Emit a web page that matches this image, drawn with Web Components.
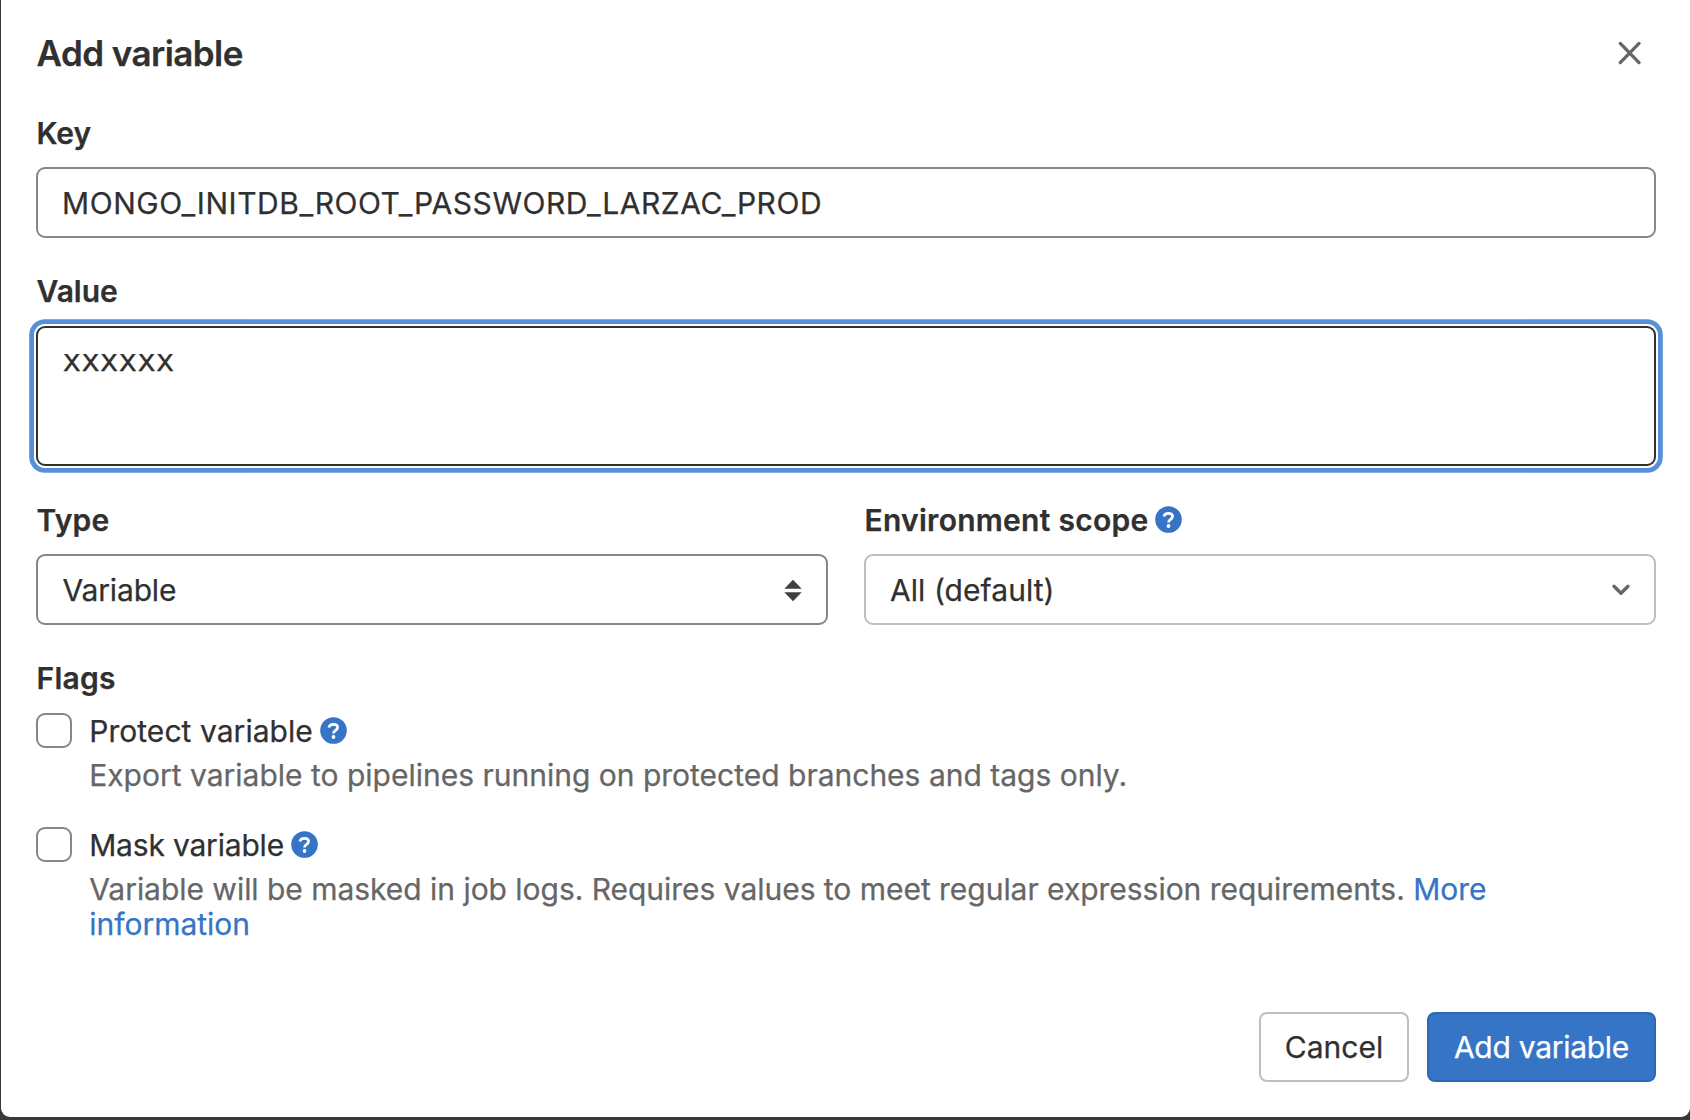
<!DOCTYPE html>
<html lang="en">
<head>
<meta charset="utf-8">
<title>Add variable</title>
<style>
html, body { margin: 0; height: 100%; }
body { background: #3a3939; overflow: hidden; font-family: Inter, "Liberation Sans", sans-serif; font-size: 30px; color: #303030; -webkit-text-stroke: .25px; }
</style>
</head>
<body>
<add-variable-modal></add-variable-modal>
<script>
const define = (name, html) => {
  const template = document.createElement('template');
  template.innerHTML = `<style>*{box-sizing:border-box}</style>${html}`;
  customElements.define(name, class extends HTMLElement {
    constructor() {
      super();
      this.attachShadow({ mode: 'open' }).append(template.content.cloneNode(true));
    }
  });
};

define('help-icon', `
<style>:host{display:block;width:27px;height:27px;flex:none;margin-top:-1px;margin-left:-.5px} svg{display:block}</style>
<svg width="27" height="27" viewBox="0 0 27 27" fill="none">
  <circle cx="13.5" cy="13.5" r="13.3" fill="#3675c5"/>
  <path d="M8.9 10.5C9.3 8.5 11 7.3 13.4 7.3c2.5 0 4.2 1.3 4.2 3.3 0 2.8-4.1 2.9-4.1 5.8" stroke="#fff" stroke-width="2.7" stroke-linejoin="round"/>
  <circle cx="13.5" cy="20" r="1.9" fill="#fff"/>
</svg>`);

define('close-button', `
<style>:host{display:block;width:24px;height:24px} svg{display:block}</style>
<svg width="24" height="24" viewBox="0 0 24 24" fill="none" stroke="#666" stroke-width="3.3" stroke-linecap="round">
  <path d="M2.3 2.4 21 21.6M21 2.4 2.3 21.6"/>
</svg>`);

define('sort-icon', `
<style>:host{display:block;width:18px;height:23px} svg{display:block}</style>
<svg width="18" height="23" viewBox="0 0 18 23" fill="#404040"><path d="M9 .8 17.7 9.7H.3ZM9 22.2.3 13.3h17.4Z"/></svg>`);

define('chevron-icon', `
<style>:host{display:block;width:18px;height:12px} svg{display:block}</style>
<svg width="18" height="12" viewBox="0 0 18 12" fill="none" stroke="#666" stroke-width="3.3" stroke-linecap="round" stroke-linejoin="round"><path d="M2 2.3 9 9.2l7-6.9"/></svg>`);

define('form-group', `
<style>
:host{display:flex;flex-direction:column;gap:16px;min-width:0}
.label{display:flex;align-items:center;gap:7px;height:36px;line-height:36px;font-weight:600;letter-spacing:var(--label-ls,0);padding-left:.5px;white-space:nowrap}
</style>
<div class="label"><slot name="label"></slot></div><slot></slot>`);

define('text-control', `
<style>
:host{display:block;box-sizing:border-box;height:71px;border:2px solid #868686;border-radius:9px;background:#fff;padding:0 24px;line-height:68px;white-space:nowrap}
:host([multiline]){height:140px;border-color:#303030;padding:14px 24.5px;line-height:36px;font-family:"DejaVu Sans Mono",monospace;font-size:31px;box-shadow:0 0 0 2px #fff,0 0 0 6.8px #5590d8}
</style><slot></slot>`);

define('select-control', `
<style>
:host{display:flex;align-items:center;justify-content:space-between;box-sizing:border-box;height:71px;border:2px solid var(--edge,#868686);border-radius:9px;background:#fff;padding:1px 24px 0;line-height:68px;white-space:nowrap}
</style><slot></slot><slot name="icon"></slot>`);

define('check-option', `
<style>
:host{display:grid;grid-template-columns:36px 1fr;column-gap:17.2px}
.box{width:36px;height:35px;border:2px solid #868686;border-radius:9px;background:#fff}
.name{display:flex;align-items:center;gap:8px;height:36px;line-height:36px}
.help{grid-column:2;color:#666;line-height:35px;padding:8.5px 40px 0 0;letter-spacing:var(--help-ls,0)}
</style>
<div class="box"></div>
<div class="name"><slot name="name"></slot><help-icon></help-icon></div>
<div class="help"><slot></slot></div>`);

define('action-button', `
<style>
:host{display:block;box-sizing:border-box;height:70px;border:2px solid #bfbfbf;border-radius:8px;background:#fff;text-align:center;line-height:66px;white-space:nowrap}
:host([primary]){background:#3675c5;border-color:#2a68bb;color:#fff}
</style><slot></slot>`);

define('add-variable-modal', `
<style>
:host{display:flex;flex-direction:column;box-sizing:border-box;width:1689px;height:1117px;margin-left:1px;padding:31px 34px 35px 35px;background:#fff;border-radius:0 0 9px 9px}
header{display:flex;justify-content:space-between;height:44px;padding-right:14px}
h1{margin:0;padding-left:.5px;font-size:35px;font-weight:600;line-height:44px;letter-spacing:-.55px}
close-button{margin-top:10px}
main{display:flex;flex-direction:column;padding-top:40px}
.value{margin-top:35px;gap:17px}
.row{display:grid;grid-template-columns:792px 792px;gap:36px;margin-top:36px}
.flags{margin-top:35px;gap:17px}
.options{display:flex;flex-direction:column;gap:34.5px}
footer{display:flex;justify-content:flex-end;gap:18px;margin-top:auto}
sort-icon{margin-right:.5px}
a{color:#3675c5;letter-spacing:0}
</style>
<header><h1>Add variable</h1><close-button></close-button></header>
<main>
  <form-group style="--label-ls:-.1px"><span slot="label">Key</span>
    <text-control style="letter-spacing:.55px">MONGO_INITDB_ROOT_PASSWORD_LARZAC_PROD</text-control></form-group>
  <form-group class="value"><span slot="label">Value</span>
    <text-control multiline>xxxxxx</text-control></form-group>
  <div class="row">
    <form-group style="--label-ls:.2px"><span slot="label">Type</span>
      <select-control><span style="letter-spacing:-.15px;padding-left:.5px">Variable</span><sort-icon slot="icon"></sort-icon></select-control></form-group>
    <form-group style="--label-ls:.28px"><span slot="label">Environment scope</span><help-icon slot="label"></help-icon>
      <select-control style="--edge:#bfbfbf"><span style="letter-spacing:.06px">All (default)</span><chevron-icon slot="icon"></chevron-icon></select-control></form-group>
  </div>
  <form-group class="flags" style="--label-ls:.25px"><span slot="label">Flags</span>
    <div class="options">
      <check-option><span slot="name" style="letter-spacing:.05px">Protect variable</span>Export variable to pipelines running on protected branches and tags only.</check-option>
      <check-option style="--help-ls:-.03px"><span slot="name" style="letter-spacing:-.19px">Mask variable</span>Variable will be masked in job logs. Requires values to meet regular expression requirements. <a>More information</a></check-option>
    </div></form-group>
</main>
<footer>
  <action-button style="width:150px">Cancel</action-button>
  <action-button primary style="width:229px;letter-spacing:-.28px">Add variable</action-button>
</footer>`);
</script>
</body>
</html>
